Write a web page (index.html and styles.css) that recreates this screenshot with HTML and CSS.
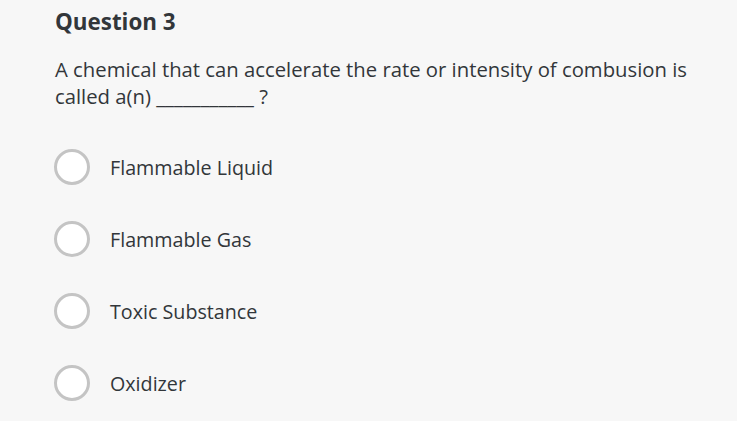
FILE: index.html
```html
<!DOCTYPE html>
<html>
<head>
<meta charset="utf-8">
<link rel="stylesheet" href="styles.css">
</head>
<body>
<div class="question">
  <h2 class="title">Question 3</h2>
  <p class="prompt">A chemical that can accelerate the rate or intensity of combusion is called a(n) ___________ ?</p>
  <ul class="options">
    <li class="option"><span class="radio"></span><span class="label">Flammable Liquid</span></li>
    <li class="option"><span class="radio"></span><span class="label">Flammable Gas</span></li>
    <li class="option"><span class="radio"></span><span class="label">Toxic Substance</span></li>
    <li class="option"><span class="radio"></span><span class="label">Oxidizer</span></li>
  </ul>
</div>
</body>
</html>
```
FILE: styles.css
```css
html, body {
  margin: 0;
  padding: 0;
  background: #f7f7f7;
}
body {
  font-family: "Open Sans", Lato, sans-serif;
  color: #32363a;
}
.question {
  padding: 7px 20px 0 55px;
}
.title {
  margin: 0;
  font-size: 22.4px;
  font-weight: 700;
  line-height: 30px;
}
.prompt {
  margin: 19px 0 0 0;
  font-size: 20.3px;
  line-height: 27px;
  width: 645px;
}
.options {
  list-style: none;
  margin: 39px 0 0 0;
  padding: 0;
  display: flex;
  flex-direction: column;
  gap: 36px;
}
.option {
  display: flex;
  align-items: center;
  height: 36px;
}
.radio {
  box-sizing: border-box;
  width: 36px;
  height: 36px;
  border: 3px solid #c4c4c4;
  border-radius: 50%;
  background: #fff;
  margin-left: -1px;
  flex: none;
}
.label {
  margin-left: 20px;
  font-size: 19.7px;
}
```
